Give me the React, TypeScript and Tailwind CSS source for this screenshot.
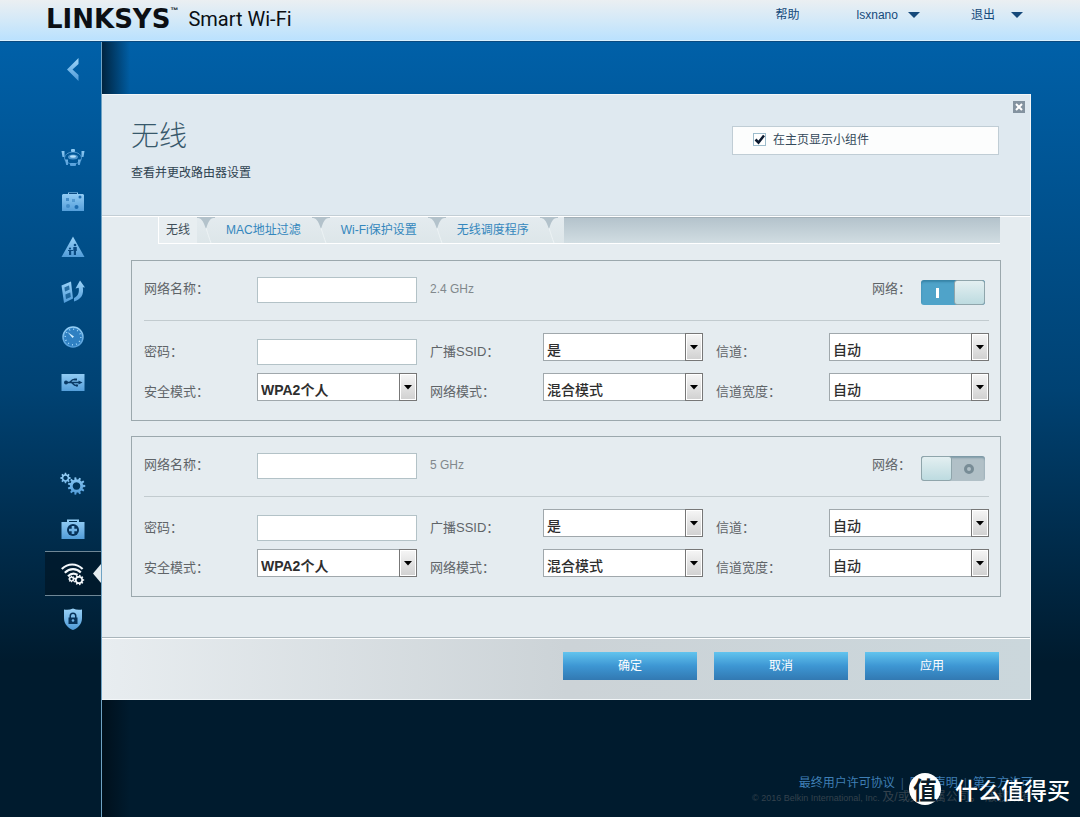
import { useState } from "react";
import type { ReactNode } from "react";

const FONT = "font-['Liberation_Sans','Noto_Sans_CJK_SC',sans-serif]";

// Sidebar icons share one 24px box and the blue gradient defined in <IconDefs />.
function IconDefs() {
  return (
    <svg className="absolute size-0" aria-hidden="true">
      <defs>
        <linearGradient id="ice" x1="0" y1="0" x2="0" y2="24" gradientUnits="userSpaceOnUse">
          <stop offset="0" stopColor="#9fd6fa" />
          <stop offset="1" stopColor="#4a97d6" />
        </linearGradient>
      </defs>
    </svg>
  );
}

function Icon({ children }: { children: ReactNode }) {
  return (
    <svg viewBox="0 0 24 24" className="size-6" fill="url(#ice)" aria-hidden="true">
      {children}
    </svg>
  );
}

function gearPath(cx: number, cy: number, outer: number, inner: number, teeth: number) {
  const points: string[] = [];
  const step = (Math.PI * 2) / teeth;
  for (let i = 0; i < teeth; i++) {
    const a = i * step;
    const corners = [
      [inner, -0.3],
      [outer, -0.18],
      [outer, 0.18],
      [inner, 0.3],
    ];
    for (const [r, k] of corners) {
      const t = a + k * step;
      points.push(`${(cx + r * Math.cos(t)).toFixed(2)} ${(cy + r * Math.sin(t)).toFixed(2)}`);
    }
  }
  return `M${points.join("L")}Z`;
}

const devicesIcon = (
  <Icon>
    <ellipse cx="12" cy="13" rx="8.500" ry="6" fill="none" stroke="#4d94cc" strokeWidth="1" />
    <ellipse cx="12" cy="12" rx="5" ry="2.500" fill="#4d94cc" />
    <ellipse cx="12" cy="11.500" rx="3" ry="1.200" fill="#b5e0fb" />
    <rect x="10" y="4" width="4" height="3" rx="1" />
    <path d="M.5 6h3v6h-2zM20.500 6h3l-1 6h-2zM4 14.500h3v5.500H5.200zM17 14.500h3L18.800 20H17z" />
    <rect x="9" y="18" width="6" height="3" rx="1" />
  </Icon>
);

const guestIcon = (
  <Icon>
    <path d="M2 4h5V2.500h10V4h5l1 1v16H1V5z" />
    <rect x="8" y="3" width="8" height="1" fill="#0a4a82" />
    <g fill="#1e6db0">
      <rect x="5" y="8" width="3" height="3" opacity=".6" />
      <rect x="11" y="9" width="3" height="3" opacity=".4" />
      <circle cx="19" cy="7" r="1.500" />
      <circle cx="7" cy="16" r="2" opacity=".5" />
      <circle cx="15.500" cy="17" r="2" />
    </g>
  </Icon>
);

const parentalIcon = (
  <Icon>
    <path d="M12 1.500L23.500 22H.5z" />
    <g fill="#0a4a82">
      <circle cx="14" cy="10" r="1.300" />
      <path d="M12.300 12h3.500v4h-.8v4h-2.200v-4h-.5z" />
      <circle cx="9" cy="13.500" r="1.100" />
      <path d="M7 15h5v1h-1.800v4H8v-4H7z" />
    </g>
  </Icon>
);

const mediaIcon = (
  <Icon>
    <path
      d="M.5 5.500L10 1.500l2 17L3 23zM3.500 7.500l.5 4 4.500-2-.5-4zM4.500 14.500l.5 4.500 4.700-2-.5-4.500z"
      fillRule="evenodd"
    />
    <path d="M3.500 7.500l4.500-2 .5 4-4.500 2zM4.500 14.500l4.700-2 .5 4.500L5 19z" opacity=".3" />
    <path d="M19 .5L24 7.500l-2.200-.3c1.200 7-1.300 12-8.800 14.300v-3.500c4-2 5.500-5.500 4.700-10.300l-3.200.8z" />
  </Icon>
);

const speedIcon = (
  <Icon>
    <circle cx="12" cy="12" r="10" fill="#2f80c2" stroke="url(#ice)" strokeWidth="1.500" />
    <circle
      cx="12"
      cy="12"
      r="7.800"
      fill="none"
      stroke="#9fd6fa"
      strokeWidth="1.500"
      strokeDasharray="1 3.080"
    />
    <path d="M6.500 7l6.500 4.500-1.500 1.500z" fill="#d4efff" />
  </Icon>
);

const usbIcon = (
  <Icon>
    <rect x=".5" y="4" width="23" height="17" />
    <g fill="none" stroke="#0a3a66" strokeWidth="1.300">
      <path d="M5 12.500h13M8 12.500c2 0 2-3 5-3h1M10 12.500c2 0 2 3 5 3h1" />
    </g>
    <g fill="#0a3a66">
      <circle cx="5" cy="12.500" r="2" />
      <path d="M17.500 10.500l4 2-4 2zM13.500 8.500h2.500v2h-2.500zM15 14.500h2v2h-2z" />
    </g>
  </Icon>
);

const gearsIcon = (
  <svg viewBox="0 0 26 24" className="h-6 w-7" fill="url(#ice)" fillRule="evenodd" aria-hidden="true">
    <path d={`${gearPath(5.5, 6, 5.2, 3.8, 8)}M5.500 3.800a2.200 2.200 0 1 0 .01 0z`} />
    <path d={`${gearPath(16.5, 14, 8.8, 6.6, 11)}M16.500 10.200a3.800 3.800 0 1 0 .01 0z`} />
  </svg>
);

const troubleshootIcon = (
  <Icon>
    <path d="M.5 5H6V2.500h12V5h5.500v17H.5zM8 4v1h8V4z" fillRule="evenodd" />
    <circle cx="12" cy="13" r="6" fill="#06325a" />
    <path d="M10.700 9h2.600v2.700H16v2.600h-2.700V17h-2.600v-2.700H8v-2.600h2.700z" />
  </Icon>
);

const wirelessIcon = (
  <svg viewBox="0 0 24 24" className="size-6" aria-hidden="true">
    <g fill="none" stroke="#f4f8fb" strokeWidth="2.200">
      <path d="M.8 7c6.300-6 14.500-6 20.800 0M3.800 10.800c5-4.800 11.500-4.800 16-.3M7 14.300c3-3 6.500-3.300 9.500-1.300" />
    </g>
    <g fill="#f4f8fb" fillRule="evenodd">
      <path d={`${gearPath(10.5, 17, 3.4, 2.6, 8)}M10.500 15.800a1.200 1.200 0 1 0 .01 0z`} />
      <path d={`${gearPath(18, 18, 5.2, 4.1, 9)}M18 15.700a2.300 2.300 0 1 0 .01 0z`} />
    </g>
  </svg>
);

const securityIcon = (
  <Icon>
    <path d="M3 2.500q4.500 1 9-1 4.500 2 9 1V11c0 6-4 10-9 12-5-2-9-6-9-12z" />
    <path
      d="M7.500 10.500h1V9a3.500 3.500 0 0 1 7 0v1.500h1V17h-9zM10 10.500h4V9a2 2 0 0 0-4 0z"
      fill="#06325a"
      fillRule="evenodd"
    />
    <circle cx="12" cy="13.500" r="1.300" />
  </Icon>
);

const APPS = [
  { label: "设备列表", icon: devicesIcon },
  { label: "访客访问", icon: guestIcon },
  { label: "家长控制", icon: parentalIcon },
  { label: "媒体优先级", icon: mediaIcon },
  { label: "速度测试", icon: speedIcon },
  { label: "外部存储", icon: usbIcon },
];

const SETTINGS = [
  { label: "连接", icon: gearsIcon },
  { label: "故障排除", icon: troubleshootIcon },
  { label: "无线设置", icon: wirelessIcon, active: true },
  { label: "安全", icon: securityIcon },
];

function NavItem({ label, icon, active }: { label: string; icon: ReactNode; active?: boolean }) {
  return (
    <li
      className={
        active
          ? "relative border-y border-[#6f8796] bg-[#00131f]/60"
          : "border-y border-transparent"
      }
    >
      <button aria-label={label} className="flex h-[43px] w-full items-center justify-center">
        {icon}
      </button>
      {active && (
        <span className="absolute top-3 right-0 h-[19px] w-2 bg-[#e6edf0] [clip-path:polygon(100%_0,0_50%,100%_100%)]" />
      )}
    </li>
  );
}

function Sidebar() {
  return (
    <nav className="w-[102px] shrink-0 border-r border-[#6fa3c4]">
      <button aria-label="返回" className="mt-4 ml-[63px] block">
        <svg viewBox="0 0 20 24" className="h-6 w-5" fill="url(#ice)" aria-hidden="true">
          <path d="M15.500 0v6L9.500 11.500l6 5.500v6L4 11.500z" />
        </svg>
      </button>
      <ul className="mt-[52px] ml-[45px]">
        {APPS.map((item) => (
          <NavItem key={item.label} {...item} />
        ))}
      </ul>
      <ul className="mt-[57px] ml-[45px]">
        {SETTINGS.map((item) => (
          <NavItem key={item.label} {...item} />
        ))}
      </ul>
    </nav>
  );
}

function Caret() {
  return <span className="h-[6px] w-3 bg-[#15497a] [clip-path:polygon(0_0,100%_0,50%_100%)]" />;
}

function TopBar() {
  return (
    <header className="flex h-[42px] items-start justify-between border-b border-[#0a4a80] bg-linear-to-b from-[#ebeff2] via-[#d3e9f8] to-[#b9e1fe] pr-[57px] pl-[46px] text-xs text-[#15497a] shadow-[inset_0_-1px_0_#d9f1ff]">
      <div className="flex items-center gap-[10px] pt-1 text-[#0b0f14]">
        <div className="flex items-start">
          <span className="font-['DejaVu_Sans',sans-serif] text-[26px] leading-7 font-bold">
            LINKSYS
          </span>
          <span className="text-[8px] leading-3 font-bold">™</span>
        </div>
        <span className="font-['Roboto',sans-serif] text-[20px] leading-[30px]">Smart Wi-Fi</span>
      </div>
      <div className="flex h-[30px] items-center">
        <a href="#help">帮助</a>
        <button className="ml-[57px] flex items-center gap-[10px]">
          lsxnano
          <Caret />
        </button>
        <button className="ml-[51px] flex items-center gap-4">
          退出
          <Caret />
        </button>
      </div>
    </header>
  );
}

const TABS = ["无线", "MAC地址过滤", "Wi-Fi保护设置", "无线调度程序"];

function TabNotch() {
  return (
    <svg viewBox="0 0 18 26" className="h-[26px] w-[18px] shrink-0" aria-hidden="true">
      <path d="M0 0h18v1c-4 0-6 1-9 11C6 3 4 1 0 1z" fill="#b3c2cb" />
      <path d="M9 11c2 6 3 10 5 15" fill="none" stroke="#edf3f5" />
    </svg>
  );
}

function Tabs({ active, onChange }: { active: string; onChange: (tab: string) => void }) {
  return (
    <div
      role="tablist"
      className="mr-[30px] ml-14 flex h-[27px] border-b border-l border-white bg-linear-to-b from-[#b3c2cb] to-[#d1dde2] shadow-[inset_0_1px_0_#a3b0b8]"
    >
      <div className="flex bg-linear-to-b from-[#e4ebef] to-[#dde6e9]">
        {TABS.map((tab, i) => (
          <div key={tab} className="flex">
            <button
              role="tab"
              aria-selected={tab === active}
              onClick={() => onChange(tab)}
              className={`h-[26px] text-xs ${i === 0 ? "px-[7px]" : "px-[11px]"} ${
                tab === active ? "bg-[#e8eef1] text-[#3f4e58]" : "text-[#3487bd]"
              }`}
            >
              {tab}
            </button>
            <TabNotch />
          </div>
        ))}
        <span className="w-[6px]" />
      </div>
    </div>
  );
}

function TextField({ id, label }: { id: string; label: string }) {
  return (
    <div className="flex">
      <label htmlFor={id} className="w-[113px] shrink-0 pt-[9px] leading-5">
        {label}
      </label>
      <input
        id={id}
        className="mt-[6px] h-[26px] w-0 flex-1 border border-[#b3c2c7] bg-white px-1 text-sm text-[#333]"
      />
    </div>
  );
}

function SelectField({ id, label, options }: { id: string; label: string; options: string[] }) {
  return (
    <div className="flex">
      <label htmlFor={id} className="w-[113px] shrink-0 pt-[9px] leading-5">
        {label}
      </label>
      <div className="relative h-7 w-0 flex-1">
        <select
          id={id}
          className={`h-7 w-full appearance-none border border-[#a0a8ac] bg-white pt-[6px] pr-5 pl-[3px] text-sm leading-5 text-[#2e2e2e] ${
            options[0].startsWith("WPA") ? "font-bold" : "font-medium"
          }`}
        >
          {options.map((option) => (
            <option key={option}>{option}</option>
          ))}
        </select>
        <span className="pointer-events-none absolute inset-y-0 right-0 flex w-[18px] items-center justify-center border border-[#777] bg-linear-to-b from-[#f6f6f6] to-[#d0d0d0] shadow-[inset_0_0_0_1px_#fff]">
          <span className="h-[5px] w-[9px] bg-black [clip-path:polygon(0_0,100%_0,50%_100%)]" />
        </span>
      </div>
    </div>
  );
}

function NetworkSwitch({ id, defaultOn }: { id: string; defaultOn: boolean }) {
  const [on, setOn] = useState(defaultOn);
  return (
    <button
      id={id}
      role="switch"
      aria-checked={on}
      onClick={() => setOn(!on)}
      className={`flex h-[25px] w-16 rounded-[3px] ${
        on ? "bg-[#4fa3c9]" : "flex-row-reverse bg-[#b1c0c7]"
      } shadow-[inset_0_2px_2px_rgba(0,60,90,0.3)]`}
    >
      <span className="flex h-full flex-1 items-center justify-center">
        {on ? (
          <span className="h-[10px] w-[3px] bg-white" />
        ) : (
          <span className="size-[10px] rounded-full border-[3px] border-[#788c96]" />
        )}
      </span>
      <span className="h-[25px] w-[31px] rounded-[3px] border border-[#8fa5ab] bg-linear-to-b from-[#e3eff1] to-[#bddbe0]" />
    </button>
  );
}

function NetworkBand({ id, band, defaultOn }: { id: string; band: string; defaultOn: boolean }) {
  return (
    <section className="border border-[#9ba8ad] pr-[11px] pb-[18px] pl-3 text-[13px] text-[#5f6468]">
      <div className="flex h-[60px] items-start border-b border-[#c2cbcf] pt-4">
        <label htmlFor={`${id}-name`} className="w-[113px] shrink-0 pt-[2px] leading-5">
          网络名称：
        </label>
        <input
          id={`${id}-name`}
          className="h-[26px] w-40 border border-[#b3c2c7] bg-white px-1 text-sm text-[#333]"
        />
        <span className="pt-[2px] pl-[13px] text-xs leading-5 text-[#81888c]">{band}</span>
        <div className="mr-1 ml-auto flex gap-[10px]">
          <label htmlFor={`${id}-on`} className="pt-[2px] leading-5">
            网络：
          </label>
          <div className="pt-[3px]">
            <NetworkSwitch id={`${id}-on`} defaultOn={defaultOn} />
          </div>
        </div>
      </div>
      <div className="mt-3 grid grid-cols-3 gap-x-[13px] gap-y-2">
        <TextField id={`${id}-password`} label="密码：" />
        <SelectField id={`${id}-ssid`} label="广播SSID：" options={["是", "否"]} />
        <SelectField id={`${id}-channel`} label="信道：" options={["自动"]} />
        <SelectField
          id={`${id}-security`}
          label="安全模式："
          options={["WPA2个人", "WPA2企业", "无"]}
        />
        <SelectField id={`${id}-mode`} label="网络模式：" options={["混合模式"]} />
        <SelectField id={`${id}-width`} label="信道宽度：" options={["自动"]} />
      </div>
    </section>
  );
}

function Dialog() {
  const [tab, setTab] = useState(TABS[0]);
  const [showWidget, setShowWidget] = useState(true);

  return (
    <main className="relative border border-l-0 border-[#f2f6f8] bg-[#e5ecf0]">
      <button
        aria-label="关闭"
        className="absolute top-[6px] right-[5px] flex size-3 items-center justify-center bg-[#8493a0]"
      >
        <svg viewBox="0 0 12 12" className="size-3" aria-hidden="true">
          <path d="M3 3l6 6M9 3l-6 6" stroke="#fff" strokeWidth="2" />
        </svg>
      </button>

      <div className="flex h-[121px] items-start justify-between border-b border-[#c3ced5] bg-[#dfe9f0] pr-[31px] pl-[29px] shadow-[0_1px_0_#fff]">
        <div className="pt-6">
          <h1 className="text-[28px] leading-9 font-light text-[#37586b]">无线</h1>
          <p className="mt-2 text-xs leading-5 text-[#2f4350]">查看并更改路由器设置</p>
        </div>
        <label className="mt-[31px] flex h-[29px] w-[267px] items-center gap-[7px] border border-[#c0cdd5] bg-[#fcfdfd] pb-[2px] pl-5 text-xs text-[#34495a]">
          <span className="relative flex size-[13px]">
            <input
              type="checkbox"
              checked={showWidget}
              onChange={(e) => setShowWidget(e.target.checked)}
              className="size-[13px] appearance-none border border-[#9dbccc] bg-white"
            />
            {showWidget && (
              <svg
                viewBox="0 0 13 13"
                className="pointer-events-none absolute inset-0 size-[13px]"
                aria-hidden="true"
              >
                <path d="M2.500 6.500L5.500 9.500L11 2.500" fill="none" stroke="#0c1a30" strokeWidth="2.500" />
              </svg>
            )}
          </span>
          在主页显示小组件
        </label>
      </div>

      <div className="pt-px">
        <Tabs active={tab} onChange={setTab} />
      </div>

      <div className="flex flex-col gap-[15px] pt-4 pr-[29px] pb-10 pl-[29px]">
        <NetworkBand id="band24" band="2.4 GHz" defaultOn />
        <NetworkBand id="band5" band="5 GHz" defaultOn={false} />
      </div>

      <div className="flex h-[62px] justify-end gap-[17px] border-t border-[#a9b5bb] bg-linear-to-r from-[#e8edf0] via-[#ccd3d7] to-[#cbd7dc] pt-[14px] pr-[31px] shadow-[inset_0_1px_0_#fff]">
        {["确定", "取消", "应用"].map((action) => (
          <button
            key={action}
            className="h-7 w-[134px] bg-linear-to-b from-[#62c4ee] via-[#3d96d3] to-[#3279b2] text-xs text-white"
          >
            {action}
          </button>
        ))}
      </div>
    </main>
  );
}

function Watermark() {
  return (
    <div className="pointer-events-none absolute right-[10px] bottom-[10px] flex items-center gap-[14px] font-['Noto_Sans_CJK_SC',sans-serif] text-white">
      <span className="flex size-8 items-center justify-center rounded-full bg-white text-2xl leading-8 font-bold text-[#0b1b28]">
        值
      </span>
      <span className="text-[23px] leading-9 font-medium">什么值得买</span>
    </div>
  );
}

function Footer() {
  return (
    <footer className="pr-[47px] pb-3 text-right text-xs">
      <p className="flex justify-end gap-[6px] leading-[14px] text-[#2f5676]">
        <a href="#eula" className="text-[#3f7fb5]">
          最终用户许可协议
        </a>
        |
        <a href="#privacy" className="text-[#3f7fb5]">
          隐私声明
        </a>
        |
        <a href="#third-party" className="text-[#3f7fb5]">
          第三方许可
        </a>
      </p>
      <p className="leading-[14px] text-[#34424d]">
        <span className="text-[9px]">© 2016 Belkin International, Inc. </span>
        及/或其附属公司。 版权所有
      </p>
    </footer>
  );
}

export default function App() {
  return (
    <div className={`relative flex min-h-screen flex-col bg-[#001b2e] ${FONT}`}>
      <IconDefs />
      <TopBar />
      <div className="flex flex-1 bg-linear-to-b from-[#0060a8] from-0% via-[#004273] via-45% to-[#001b2e] to-80%">
        <Sidebar />
        <div className="flex flex-1 flex-col justify-between bg-linear-to-r from-[#000b14]/70 to-transparent bg-size-[28px_100%] bg-no-repeat pt-[52px]">
          <div className="pr-[49px]">
            <Dialog />
          </div>
          <Footer />
        </div>
      </div>
      <Watermark />
    </div>
  );
}
